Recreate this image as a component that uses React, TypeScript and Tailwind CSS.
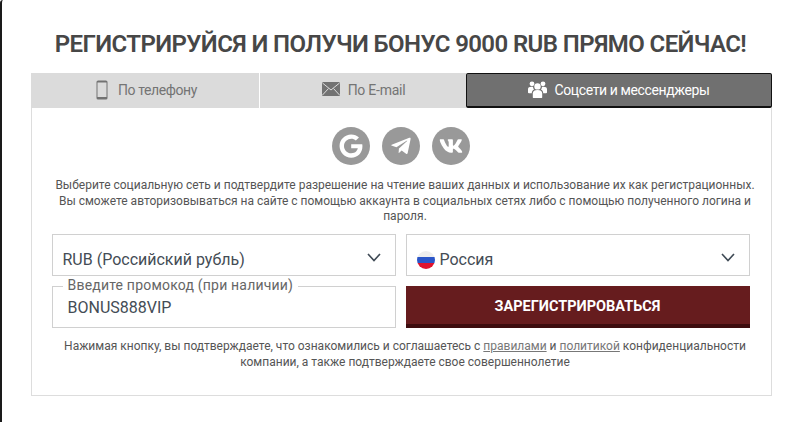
import React from "react";
import { FaGoogle, FaTelegramPlane, FaVk } from "react-icons/fa";

const Chevron = () => (
  <svg width="14" height="9" viewBox="0 0 14 9" fill="none" stroke="#3f4a55" strokeWidth="1.6" className="shrink-0">
    <path d="M1 1l6 6.5L13 1" />
  </svg>
);

const Circle = ({ children }: { children: React.ReactNode }) => (
  <div className="w-[38px] h-[38px] rounded-full bg-[#999999] flex items-center justify-center text-white">{children}</div>
);

export default function App() {
  return (
    <div className="w-[800px] h-[422px] bg-white overflow-hidden font-['Roboto',sans-serif] border-l-2 border-[#1a1a1a] pl-[29px] pr-[28px] rounded-tl-[3px]">
      <h1 className="h-[73px] pt-[28px] pr-[2px] w-[741px] text-center text-[24px] leading-[32px] font-semibold tracking-[-0.6px] text-[#474747] whitespace-nowrap">
        РЕГИСТРИРУЙСЯ И ПОЛУЧИ БОНУС 9000 RUB ПРЯМО СЕЙЧАС!
      </h1>
      <div className="flex h-[35px] w-[741px] text-[14px]">
        <div className="w-[229px] bg-[#dbdbdb] flex items-center justify-center gap-[10px] pl-[3px] text-[#747474] tracking-[-0.4px] border-r border-white">
          <svg width="12" height="20" viewBox="0 0 12 20" className="shrink-0 mb-[2px]">
            <rect x="0.5" y="0.5" width="11" height="19" rx="1.6" fill="#727272" />
            <rect x="1.5" y="2.5" width="9" height="14.5" fill="#dbdbdb" />
          </svg>
          <span>По телефону</span>
        </div>
        <div className="w-[206px] bg-[#dbdbdb] flex items-center justify-center gap-[8px] pl-[1px] text-[#747474] tracking-[-0.25px]">
          <svg width="18" height="14" viewBox="0 0 18 14" className="shrink-0 mb-[3px]">
            <rect width="18" height="14" rx="1.2" fill="#727272" />
            <path d="M0.5 1l8.5 7 8.5-7M0.5 13l6-6.5M17.5 13l-6-6.5" fill="none" stroke="#dbdbdb" strokeWidth="1" />
          </svg>
          <span>По E-mail</span>
        </div>
        <div className="flex-1 bg-[#707070] flex items-center justify-center gap-[7px] text-white tracking-[-0.38px] border border-[#111111] border-b-2 rounded-[2px]">
          <svg width="19" height="17" viewBox="0 0 19 17" fill="#ffffff" className="shrink-0 mb-[2px]">
            <circle cx="9.5" cy="5.4" r="3.2" />
            <path d="M4.8 16.5V12.4c0-2.2 1.8-3.4 4.7-3.4s4.7 1.2 4.7 3.4v4.1c0 .3-.2.5-.5.5H5.3c-.3 0-.5-.2-.5-.5z" />
            <circle cx="4" cy="2.8" r="2.4" />
            <circle cx="15" cy="2.8" r="2.4" />
            <path d="M0 11.4V8.2C0 6.600 1.400 5.800 3.600 5.800c.6 0 1 .1 1.400.2.1 1 .5 1.900 1.100 2.500-1.500.6-2.300 1.900-2.300 3.700H1c-.6 0-1-.3-1-.8zM19 11.400V8.200c0-1.600-1.400-2.400-3.600-2.400-.6 0-1 .1-1.400.2-.1 1-.5 1.900-1.100 2.500 1.500.6 2.300 1.900 2.300 3.700H18c.6 0 1-.3 1-.8z" />
          </svg>
          <span>Соцсети и мессенджеры</span>
        </div>
      </div>
      <div className="w-[741px] h-[288px] border border-t-0 border-[#dddddd] flex flex-col items-center">
        <div className="flex gap-[12px] mt-[19px] mr-[2px]">
          <Circle><FaGoogle size={24} /></Circle>
          <Circle><FaTelegramPlane size={22} /></Circle>
          <Circle><FaVk size={24} /></Circle>
        </div>
        <p className="mt-[13px] ml-[7px] w-[710px] text-center text-[12px] leading-[15.5px] text-[#555555]">
          Выберите социальную сеть и подтвердите разрешение на чтение ваших данных и использование их как регистрационных. Вы сможете авторизовываться на сайте с помощью аккаунта в социальных сетях либо с помощью полученного логина и пароля.
        </p>
        <div className="mt-[9px] mr-[2px] w-[698px] grid grid-cols-[344px_344px] gap-x-[10px] gap-y-[10px]">
          <div className="h-[42px] border border-[#d0d0d0] flex items-end justify-between pl-[10px] pr-[14px] pb-[3px] text-[16px] leading-[24px] text-[#444c55]">
            <span>RUB (Российский рубль)</span>
            <span className="mb-[10px]"><Chevron /></span>
          </div>
          <div className="h-[42px] border border-[#d0d0d0] flex items-end justify-between pl-[10px] pr-[14px] pb-[3px] text-[16px] leading-[24px] text-[#444c55]">
            <span className="flex items-center gap-[5px]">
              <span className="w-[18px] h-[18px] rounded-full overflow-hidden flex flex-col">
                <span className="h-1/3 bg-[#eeeeee]" />
                <span className="h-1/3 bg-[#2b56c8]" />
                <span className="h-1/3 bg-[#e0132e]" />
              </span>
              Россия
            </span>
            <span className="mb-[10px]"><Chevron /></span>
          </div>
          <div className="relative h-[42px] border border-[#d0d0d0] flex items-end pl-[15px] pb-[7px] text-[16px] leading-[24px] text-[#444c55]">
            BONUS888VIP
            <span className="absolute left-[10px] -top-[11px] bg-white px-[5px] text-[14px] leading-[18px] tracking-[0.2px] text-[#666666]">
              Введите промокод (при наличии)
            </span>
          </div>
          <button className="h-[42px] pt-[4px] bg-[#661c1e] border-b-4 border-[#3d0c0e] text-white text-[14.5px] font-bold flex items-center justify-center">
            ЗАРЕГИСТРИРОВАТЬСЯ
          </button>
        </div>
        <p className="mt-[10px] ml-[7px] w-[700px] text-center text-[12px] leading-[16px] text-[#555555]">
          Нажимая кнопку, вы подтверждаете, что ознакомились и соглашаетесь с <span className="underline text-[#777777]">правилами</span> и <span className="underline text-[#777777]">политикой</span> конфиденциальности компании, а также подтверждаете свое совершеннолетие
        </p>
      </div>
    </div>
  );
}
